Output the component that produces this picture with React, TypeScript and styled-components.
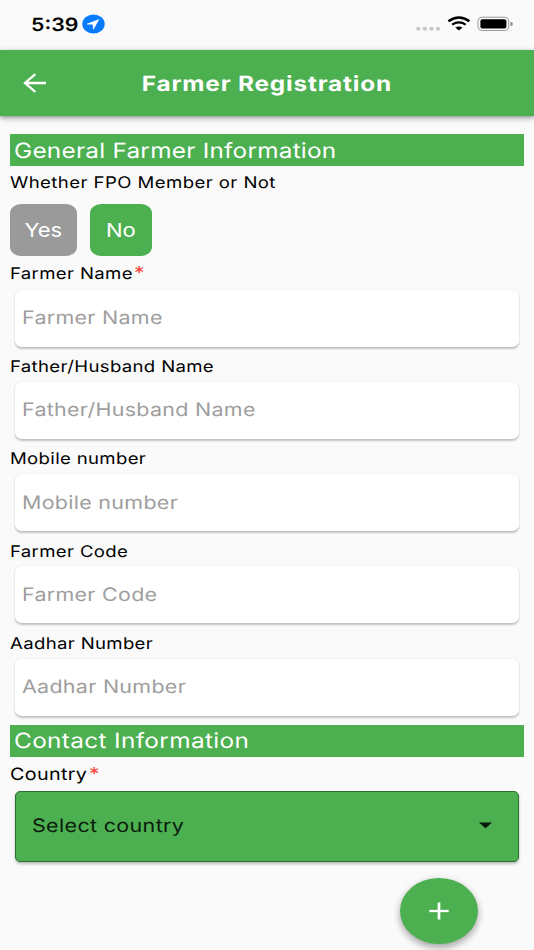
import React from 'react';
import styled, { createGlobalStyle } from 'styled-components';

const GREEN = '#4caf50';

const GlobalStyle = createGlobalStyle`
  * { box-sizing: border-box; }
  body {
    margin: 0;
    background: #fafafa;
    font-family: Inter, "Liberation Sans", sans-serif;
    text-rendering: geometricPrecision;
    overflow: hidden;
  }
`;

const Screen = styled.div`
  position: relative;
  width: 534px;
  height: 950px;
  background: #fafafa;
  overflow: hidden;
  display: flex;
  flex-direction: column;
`;

const WideText = styled.span<{ $size: number; $spacing?: number; $weight?: number; $color?: string; $center?: boolean }>`
  display: inline-block;
  white-space: nowrap;
  font-size: ${p => p.$size}px;
  font-weight: ${p => p.$weight ?? 400};
  letter-spacing: ${p => p.$spacing ?? 0}px;
  color: ${p => p.$color ?? '#000'};
  transform: scaleX(1.16);
  transform-origin: ${p => (p.$center ? 'center' : 'left')} center;
`;

const StatusBar = styled.div`
  flex: none;
  height: 50.4px;
  padding: 0 20px 2px 30.7px;
  display: flex;
  align-items: center;
  justify-content: space-between;
`;

const Clock = styled.div`
  width: 74px;
  display: flex;
  align-items: center;
  justify-content: space-between;
`;

const ClockTime = styled.div`
  padding-top: 2px;
`;

const StatusIcons = styled.div`
  display: flex;
  align-items: center;
`;

const AppBar = styled.header`
  flex: none;
  height: 66px;
  background: ${GREEN};
  box-shadow: 0 2px 6px rgba(0, 0, 0, 0.36), 0 1px 2px rgba(0, 0, 0, 0.12);
  display: grid;
  grid-template-columns: 70px 1fr 70px;
  align-items: center;
  justify-items: center;
`;

const Title = styled.h1`
  margin: 0;
  padding-top: 2.5px;
  font-size: 21px;
  line-height: 25px;
`;

const Form = styled.main`
  flex: 1;
  padding: 18.1px 10px 0;
  display: flex;
  flex-direction: column;
`;

const SectionTitle = styled.h2<{ $gap?: number; $drop?: number }>`
  flex: none;
  margin: ${p => p.$gap ?? 0}px 0 0;
  height: 32px;
  padding: ${p => p.$drop ?? 1}px 0 0 4px;
  background: ${GREEN};
  display: flex;
  align-items: center;
`;

const Label = styled.label<{ $height: number; $drop: number }>`
  flex: none;
  height: ${p => p.$height}px;
  padding-top: ${p => p.$drop}px;
  display: flex;
  align-items: center;
`;

const Caption = styled.span<{ $width?: number }>`
  width: ${p => (p.$width ? `${p.$width}px` : 'auto')};
`;

const Choices = styled.div`
  flex: none;
  display: flex;
  gap: 13.7px;
  height: 52px;
  margin: 5.8px 0 1px;
`;

const Choice = styled.button<{ $active?: boolean; $width: number }>`
  width: ${p => p.$width}px;
  padding: 1.5px 1px 0 0;
  border: 0;
  border-radius: 11px / 9.5px;
  background: ${p => (p.$active ? GREEN : '#9a9a9a')};
  font-family: inherit;
  display: flex;
  align-items: center;
  justify-content: center;
`;

const Field = styled.div`
  flex: none;
  height: 57px;
  margin: 0 5px;
  padding: 0 0 0 6.8px;
  border-radius: 7px / 6px;
  background: #fff;
  box-shadow: 0 1.5px 2px rgba(0, 0, 0, 0.22), 0 0 2px rgba(0, 0, 0, 0.05);
  display: flex;
  align-items: center;
`;

const Select = styled.div`
  flex: none;
  height: 71px;
  margin: 0 5px;
  padding: 0 25px 1px 16px;
  border: 1px solid #2c6e30;
  border-radius: 5px;
  background: ${GREEN};
  box-shadow: 0 2px 3px rgba(0, 0, 0, 0.25);
  display: flex;
  align-items: center;
  justify-content: space-between;
`;

const AddButton = styled.button`
  position: absolute;
  right: 56.5px;
  bottom: 5.6px;
  width: 78px;
  height: 66.4px;
  padding: 0;
  border: 0;
  border-radius: 50%;
  background: ${GREEN};
  box-shadow: 0 4px 7px rgba(0, 0, 0, 0.28), 0 1px 8px rgba(0, 0, 0, 0.1);
  display: flex;
  align-items: center;
  justify-content: center;
`;

const FIELDS = [
  { name: 'Farmer Name', required: true, height: 33, drop: 0 },
  { name: 'Father/Husband Name', height: 35.2, drop: 3.5 },
  { name: 'Mobile number', height: 35.2, drop: 3.5 },
  { name: 'Farmer Code', height: 35.2, drop: 3.5 },
  { name: 'Aadhar Number', height: 35.2, drop: 3.5 },
];

interface FieldLabelProps {
  text: string;
  height: number;
  drop?: number;
  size?: number;
  spacing?: number;
  starAt?: number;
}

function FieldLabel({ text, height, drop = 0, size = 16, spacing = 0.3, starAt }: FieldLabelProps) {
  return (
    <Label $height={height} $drop={drop}>
      <Caption $width={starAt}><WideText $size={size} $spacing={spacing}>{text}</WideText></Caption>
      {starAt && <WideText $size={18} $color="#f44336">*</WideText>}
    </Label>
  );
}

export default function App() {
  return (
    <>
      <GlobalStyle />
      <Screen>
        <StatusBar>
          <Clock>
            <ClockTime><WideText $size={18.4} $weight={600}>5:39</WideText></ClockTime>
            <svg width="23" height="20" viewBox="0 0 23 20">
              <ellipse cx="11.5" cy="10" rx="11.2" ry="9.6" fill="#087bfc" />
              <path d="M17.4 5 L5 9.7 Q4.7 10.3 5.3 10.4 L10.7 10.5 L10.9 15.1 Q11.3 15.7 11.8 15.1 Z" fill="#fff" />
            </svg>
          </Clock>
          <StatusIcons>
            <svg width="98" height="20" viewBox="0 0 98 20">
              <g fill="#c8c8c8">
                <ellipse cx="2.3" cy="14.8" rx="2.2" ry="2" />
                <ellipse cx="8.8" cy="14.8" rx="2.2" ry="2" />
                <ellipse cx="15.5" cy="14.8" rx="2.2" ry="2" />
                <ellipse cx="22" cy="14.8" rx="2.2" ry="2" />
              </g>
              <g fill="none" stroke="#000" strokeWidth="2.5">
                <path d="M32.4 7.3 Q42.9 -0.3 53.4 7.3" strokeWidth="2.6" />
                <path d="M36.1 10.6 Q42.9 6.2 49.7 10.6" strokeWidth="2.3" />
              </g>
              <path d="M39.3 13.4 Q42.9 11.4 46.5 13.4 L42.9 16.5 Z" fill="#000" />
              <rect x="62" y="3.2" width="30.8" height="13.3" rx="4" fill="none" stroke="#999" />
              <rect x="64.4" y="5.2" width="26" height="9.3" rx="2" fill="#000" />
              <path d="M94.5 7.8 Q96.8 8.2 96.8 9.9 Q96.8 11.6 94.5 12 Z" fill="#888" />
            </svg>
          </StatusIcons>
        </StatusBar>
        <AppBar>
          <svg width="24" height="20" viewBox="0 0 24 20" fill="none" stroke="#fff" strokeWidth="2.3">
            <path d="M23 10 H2 M12.3 1.2 L2 10 L12.3 18.8" />
          </svg>
          <Title><WideText $size={21} $weight={700} $spacing={0.7} $color="#fff" $center>Farmer Registration</WideText></Title>
        </AppBar>
        <Form>
          <SectionTitle $drop={2.2}><WideText $size={21} $spacing={0.2} $color="#fff">General Farmer Information</WideText></SectionTitle>
          <FieldLabel text="Whether FPO Member or Not" height={31.5} spacing={0.37} />
          <Choices>
            <Choice $width={66.6}><WideText $size={19} $color="#fff" $center>Yes</WideText></Choice>
            <Choice $width={61.4} $active><WideText $size={19} $color="#fff" $center>No</WideText></Choice>
          </Choices>
          {FIELDS.map(f => (
            <React.Fragment key={f.name}>
              <FieldLabel text={f.name} height={f.height} drop={f.drop} starAt={f.required ? 123.5 : undefined} />
              <Field><WideText $size={18.5} $spacing={0.25} $color="#9e9e9e">{f.name}</WideText></Field>
            </React.Fragment>
          ))}
          <SectionTitle $gap={9.9}><WideText $size={21} $spacing={0.3} $color="#fff">Contact Information</WideText></SectionTitle>
          <FieldLabel text="Country" height={33.3} drop={1.5} size={17} starAt={79} />
          <Select>
            <WideText $size={18.5} $spacing={0.3} $color="#0b1a0c">Select country</WideText>
            <svg width="15" height="7" viewBox="0 0 15 7"><path d="M1 .5 H14 L7.5 6.3 Z" fill="#07180a" /></svg>
          </Select>
        </Form>
        <AddButton aria-label="Add">
          <svg width="20" height="18" viewBox="0 0 20 18" stroke="#fff">
            <path d="M.3 9 H19.7" strokeWidth="2.3" />
            <path d="M10 .5 V17.5" strokeWidth="2.7" />
          </svg>
        </AddButton>
      </Screen>
    </>
  );
}
